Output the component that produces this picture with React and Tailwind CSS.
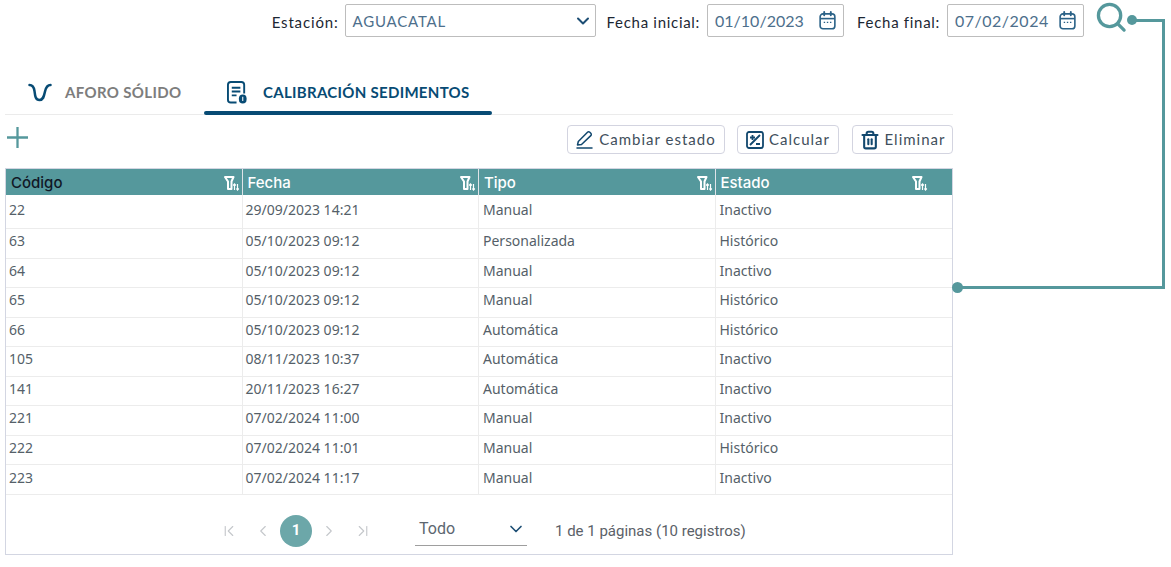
import React from "react";
import { ChevronDown, ChevronLeft, ChevronRight, ChevronFirst, ChevronLast, Trash2 } from "lucide-react";

const rows = [
  ["22", "29/09/2023 14:21", "Manual", "Inactivo", "h-[34px]", "pb-[4px]"],
  ["63", "05/10/2023 09:12", "Personalizada", "Histórico", "h-[30px]", "pb-[6px]"],
  ["64", "05/10/2023 09:12", "Manual", "Inactivo", "h-[29px]", "pb-[6px]"],
  ["65", "05/10/2023 09:12", "Manual", "Histórico", "h-[30px]", "pb-[6px]"],
  ["66", "05/10/2023 09:12", "Automática", "Histórico", "h-[29px]", "pb-[6px]"],
  ["105", "08/11/2023 10:37", "Automática", "Inactivo", "h-[30px]", "pb-[6px]"],
  ["141", "20/11/2023 16:27", "Automática", "Inactivo", "h-[29px]", "pb-[6px]"],
  ["221", "07/02/2024 11:00", "Manual", "Inactivo", "h-[30px]", "pb-[6px]"],
  ["222", "07/02/2024 11:01", "Manual", "Histórico", "h-[29px]", "pb-[6px]"],
  ["223", "07/02/2024 11:17", "Manual", "Inactivo", "h-[30px]", "pb-[4px]"],
];

const quick = "font-['Lato','Noto_Sans',sans-serif]";

function FilterIcon({ className }) {
  return (
    <svg viewBox="0 0 16 16" className={className} fill="none" stroke="white">
      <path d="M1 2h8.5L7.5 6.5V14H4V6.5L1 2z" strokeWidth="2" strokeLinejoin="round" />
      <path d="M10.5 15V9M9.2 10.5l1.3-1.5 1.3 1.5M13.5 9v6M12.3 13.5l1.2 1.5 1.3-1.5" strokeWidth="1.2" />
    </svg>
  );
}

function CalendarIcon() {
  return (
    <svg viewBox="0 0 18 20" className="h-[19px] w-[17px] text-[#2b6287]" fill="none" stroke="currentColor" strokeWidth="1.7">
      <rect x="1.2" y="3" width="15.6" height="15.8" rx="3" />
      <path d="M1.2 8h15.6" />
      <path d="M5.5 1v3.5M12.5 1v3.5" strokeLinecap="round" strokeWidth="2" />
      <path d="M5 12h1.5M8.3 12h1.5M11.6 12h1.5" strokeWidth="1.4" />
    </svg>
  );
}

function DateField({ value, tracking }) {
  return (
    <div className="flex h-[33px] w-[137px] items-center justify-between rounded-[2px] border border-[#bdbdbd] px-[7px]">
      <span className={`mt-[1px] text-[16px] text-[#4d6f8c] ${tracking} ${quick}`}>{value}</span>
      <CalendarIcon />
    </div>
  );
}

function ActionButton({ icon, label, width }) {
  return (
    <div className={`flex h-[29px] items-center justify-center gap-[5px] rounded-[4px] border border-[#d3d4e0] bg-white ${width}`}>
      {icon}
      <span className={`text-[15px] tracking-[1px] text-[#3f4f5c] ${quick}`}>{label}</span>
    </div>
  );
}

function HeaderCell({ label, dark, iconRight = "pr-[2px]", last }) {
  return (
    <div className={`flex h-full items-center justify-between pl-[5px] ${iconRight} ${last ? "" : "border-r border-[#dfe3e8]"}`}>
      <span className={`mt-[2px] text-[15px] font-medium ${dark ? "text-[#111827]" : "text-white"}`}>{label}</span>
      <FilterIcon className="mt-[2px] size-[16px]" />
    </div>
  );
}

export default function App() {
  return (
    <div className="relative h-[567px] w-[1171px] overflow-hidden bg-white font-['Inter',sans-serif]">
      <div className="flex h-[52px] items-start justify-end pr-[44px] pt-[4px]">
        <div className="flex items-center">
          <span className={`mr-[6px] mt-[4px] text-[15px] tracking-[0.85px] text-[#1c2733] ${quick}`}>Estación:</span>
          <div className="flex h-[33px] w-[251px] items-center justify-between rounded-[2px] border border-[#bdbdbd] pl-[7px] pr-[2px]">
            <span className={`mt-[2px] text-[15px] tracking-[0.8px] text-[#4d6f8c] ${quick}`}>AGUACATAL</span>
            <ChevronDown className="size-[20px] text-[#1d4e74]" strokeWidth={2.4} />
          </div>
          <span className={`ml-[11px] mr-[7px] mt-[4px] text-[15px] tracking-[0.7px] text-[#1c2733] ${quick}`}>Fecha inicial:</span>
          <DateField value="01/10/2023" tracking="tracking-[0px]" />
          <span className={`ml-[13px] mr-[7px] mt-[4px] text-[15px] tracking-[0.7px] text-[#1c2733] ${quick}`}>Fecha final:</span>
          <DateField value="07/02/2024" tracking="tracking-[0.5px]" />
          <svg viewBox="0 0 32 32" className="ml-[12px] -mt-[6px] size-[31px] text-[#55989c]" fill="none" stroke="currentColor" strokeWidth="3.4">
            <circle cx="14" cy="14" r="11.5" />
            <path d="M22.5 22.5L29 29" strokeLinecap="round" />
          </svg>
        </div>
      </div>

      <div className="ml-[5px] w-[948px]">
        <div className="flex h-[63px] items-end border-b border-[#ebebeb]">
          <div className="flex h-[48px] w-[199px] items-center pl-[23px] pt-[5px]">
            <svg viewBox="0 0 24 19" className="h-[19px] w-[24px] text-[#074b74]" fill="none" stroke="currentColor" strokeWidth="2.5" strokeLinecap="round">
              <path d="M1.5 2c3.5 0 4.5 2.5 5 6 .6 5 1 9 5 9s4.5-4 5.5-8.500c.8-3.500 2-6.500 5.500-6.500" />
            </svg>
            <span className="ml-[13px] font-['Lato',sans-serif] text-[15px] font-bold tracking-[0.35px] text-[#7d7d7d]">AFORO SÓLIDO</span>
          </div>
          <div className="relative flex h-[48px] w-[288px] items-center pl-[23px] pt-[5px]">
            <svg viewBox="0 0 22 24" className="h-[23px] w-[21px] text-[#074b74]" fill="none" stroke="currentColor" strokeWidth="2">
              <path d="M10 22.500H4a3 3 0 0 1-3-3V4a3 3 0 0 1 3-3h11a3 3 0 0 1 3 3v9" />
              <path d="M5 7h9M5 11h9M5 15h5" />
              <rect x="12.500" y="14" width="8" height="9.500" rx="4" fill="currentColor" stroke="none" />
              <path d="M16.500 16.500v4.500" stroke="#ffffff" strokeWidth="1.1" />
            </svg>
            <span className="ml-[15px] font-['Lato',sans-serif] text-[15px] font-bold tracking-[0.3px] text-[#074b74]">CALIBRACIÓN SEDIMENTOS</span>
            <div className="absolute inset-x-0 bottom-[-1px] h-[4px] rounded-full bg-[#074b74]" />
          </div>
        </div>

        <div className="flex h-[53px] items-start justify-between pt-[10px]">
          <svg viewBox="0 0 22 22" className="ml-[2px] mt-[2px] size-[21px] text-[#55989c]" fill="none" stroke="currentColor" strokeWidth="2.4">
            <path d="M11 0v22M0 11h22" />
          </svg>
          <div className="flex">
            <ActionButton width="w-[158px]" label="Cambiar estado" icon={
              <svg viewBox="0 0 18 18" className="size-[18px] text-[#12486e]" fill="none" stroke="currentColor" strokeWidth="1.5" strokeLinejoin="round">
                <path d="M1.500 14l.8-3.500L11.500 1.300a1.600 1.600 0 0 1 2.300 0l1 1a1.600 1.600 0 0 1 0 2.300L5.500 13.500 1.500 14z" />
                <path d="M1 17h15" strokeLinecap="round" />
              </svg>
            } />
            <ActionButton width="ml-[12px] w-[102px]" label="Calcular" icon={
              <svg viewBox="0 0 18 18" className="size-[18px] text-[#12486e]" fill="none" stroke="currentColor" strokeWidth="1.8">
                <rect x="1" y="1" width="16" height="16" rx="2" />
                <path d="M14 4L4 14M4 6.500h5M6.500 4v5M10 13h4" />
              </svg>
            } />
            <ActionButton width="ml-[13px] w-[101px]" label="Eliminar" icon={<Trash2 className="size-[20px] text-[#12486e]" strokeWidth={2.5} />} />
          </div>
        </div>

        <div className="h-[387px] border border-[#d3d6e2]">
          <div className="grid h-[26px] grid-cols-4 bg-[#55989c]">
            <HeaderCell label="Código" dark />
            <HeaderCell label="Fecha" />
            <HeaderCell label="Tipo" />
            <HeaderCell label="Estado" iconRight="pr-[24px]" last />
          </div>
          {rows.map((r) => (
            <div key={r[0]} className={`grid grid-cols-4 border-b border-[#ececec] font-['Noto_Sans',sans-serif] text-[14px] text-[#555f69] ${r[4]}`}>
              {r.slice(0, 4).map((c, i) => (
                <div key={i} className={`flex h-full items-center ${i < 2 ? "pl-[3px]" : "pl-[4px]"} ${r[5]} ${i < 3 ? "border-r border-[#ececec]" : ""}`}>
                  {c}
                </div>
              ))}
            </div>
          ))}
          <div className="flex h-[58px] items-center pl-[214px] pt-[13px] font-['Roboto',sans-serif]">
            <ChevronFirst className="size-[18px] text-[#c4c7cb]" strokeWidth={1.5} />
            <ChevronLeft className="ml-[16px] size-[18px] text-[#c4c7cb]" strokeWidth={1.5} />
            <div className="ml-[8px] flex size-[32px] items-center justify-center rounded-full bg-[#6ca7a9] text-[15px] font-bold text-white">1</div>
            <ChevronRight className="ml-[8px] size-[18px] text-[#c4c7cb]" strokeWidth={1.5} />
            <ChevronLast className="ml-[16px] size-[18px] text-[#c4c7cb]" strokeWidth={1.5} />
            <div className="ml-[43px] flex h-[30px] w-[112px] items-center justify-between border-b border-[#9e9e9e] pb-[3px] pl-[4px] pr-[1px]">
              <span className="text-[16px] text-[#5c6670]">Todo</span>
              <ChevronDown className="size-[20px] text-[#1d4e74]" strokeWidth={2} />
            </div>
            <span className="ml-[28px] mt-[2px] text-[15px] text-[#5b6168]">1 de 1 páginas (10 registros)</span>
          </div>
        </div>
      </div>

      <div className="absolute left-[1127px] top-[15px] size-[10px] rounded-full bg-[#55989c]" />
      <div className="absolute left-[1135px] top-[19px] h-[3px] w-[30px] bg-[#55989c]" />
      <div className="absolute left-[1162px] top-[19px] h-[270px] w-[3px] bg-[#55989c]" />
      <div className="absolute left-[957px] top-[286px] h-[3px] w-[208px] bg-[#55989c]" />
      <div className="absolute left-[952px] top-[282px] size-[11px] rounded-full bg-[#55989c]" />
    </div>
  );
}
